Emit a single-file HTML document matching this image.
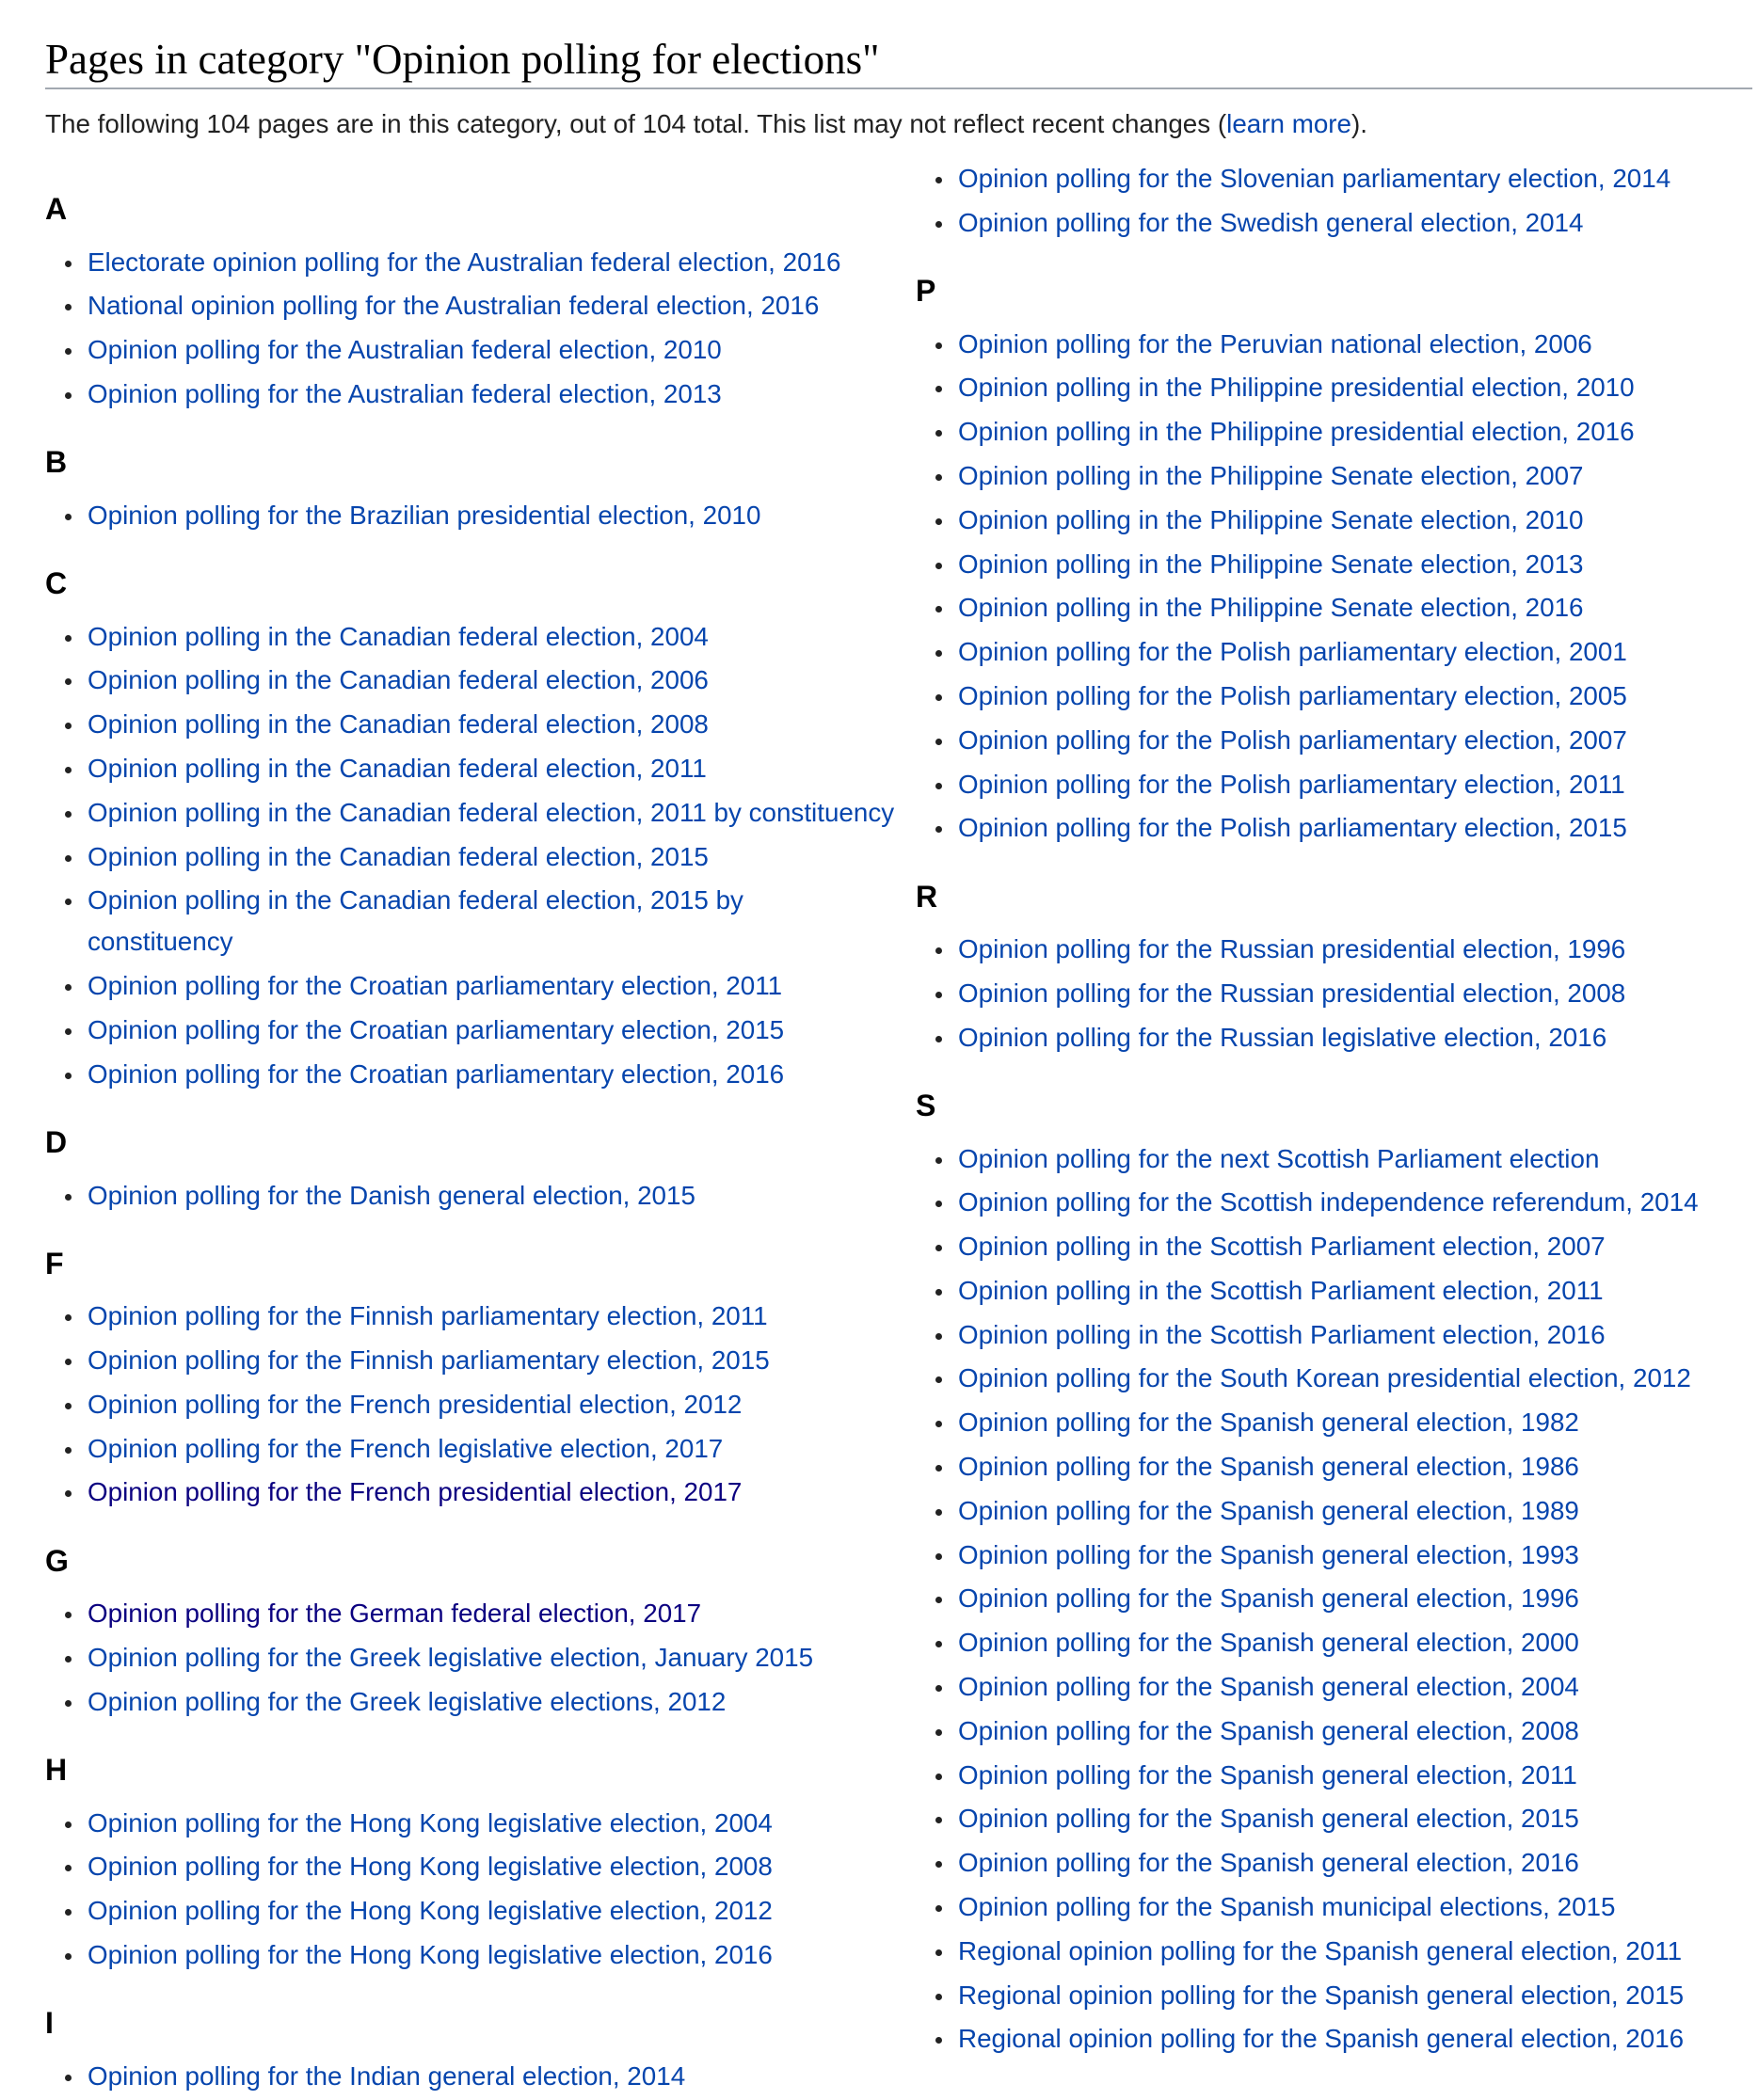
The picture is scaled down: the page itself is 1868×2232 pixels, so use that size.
<!DOCTYPE html>
<html><head><meta charset="utf-8"><style>
html,body{margin:0;padding:0;background:#fff;}
body{width:1868px;height:2218px;overflow:hidden;position:relative;font-family:"Liberation Sans",Arial,sans-serif;color:#222;}
h1{position:absolute;left:48px;top:36px;margin:0;font-family:"Liberation Serif",Georgia,serif;font-weight:normal;font-size:45px;line-height:54px;color:#000;white-space:nowrap;}
.rule{position:absolute;left:48px;right:6px;top:93px;height:2px;background:#a2a9b1;}
.intro{position:absolute;left:48px;top:114px;font-size:27.8px;line-height:36px;color:#222;white-space:nowrap;}
a{color:#0645ad;text-decoration:none;}
a.v{color:#0b0080;}
.col{position:absolute;top:168px;width:920px;}
.c1{left:48px;} .c2{left:973px;}
h3{margin:30.2px 0 14.6px 0;font-size:32px;line-height:40px;font-weight:bold;color:#000;}
.c1 h3:first-child{margin-top:34px;}
ul{list-style:none;margin:0;padding:0;}
li{position:relative;padding-left:45px;font-size:27.8px;line-height:44px;margin-bottom:2.8px;white-space:nowrap;}
li:before{content:"";position:absolute;left:21px;top:20px;width:7px;height:7px;border-radius:50%;background:#222;}
</style></head><body>
<h1>Pages in category "Opinion polling for elections"</h1>
<div class="rule"></div>
<div class="intro">The following 104 pages are in this category, out of 104 total. This list may not reflect recent changes (<a>learn more</a>).</div>

<div class="col c1">
<h3>A</h3><ul>
<li><a>Electorate opinion polling for the Australian federal election, 2016</a></li>
<li><a>National opinion polling for the Australian federal election, 2016</a></li>
<li><a>Opinion polling for the Australian federal election, 2010</a></li>
<li><a>Opinion polling for the Australian federal election, 2013</a></li></ul>
<h3>B</h3><ul>
<li><a>Opinion polling for the Brazilian presidential election, 2010</a></li></ul>
<h3>C</h3><ul>
<li><a>Opinion polling in the Canadian federal election, 2004</a></li>
<li><a>Opinion polling in the Canadian federal election, 2006</a></li>
<li><a>Opinion polling in the Canadian federal election, 2008</a></li>
<li><a>Opinion polling in the Canadian federal election, 2011</a></li>
<li><a>Opinion polling in the Canadian federal election, 2011 by constituency</a></li>
<li><a>Opinion polling in the Canadian federal election, 2015</a></li>
<li><a>Opinion polling in the Canadian federal election, 2015 by<br>constituency</a></li>
<li><a>Opinion polling for the Croatian parliamentary election, 2011</a></li>
<li><a>Opinion polling for the Croatian parliamentary election, 2015</a></li>
<li><a>Opinion polling for the Croatian parliamentary election, 2016</a></li></ul>
<h3>D</h3><ul>
<li><a>Opinion polling for the Danish general election, 2015</a></li></ul>
<h3>F</h3><ul>
<li><a>Opinion polling for the Finnish parliamentary election, 2011</a></li>
<li><a>Opinion polling for the Finnish parliamentary election, 2015</a></li>
<li><a>Opinion polling for the French presidential election, 2012</a></li>
<li><a>Opinion polling for the French legislative election, 2017</a></li>
<li><a class="v">Opinion polling for the French presidential election, 2017</a></li></ul>
<h3>G</h3><ul>
<li><a class="v">Opinion polling for the German federal election, 2017</a></li>
<li><a>Opinion polling for the Greek legislative election, January 2015</a></li>
<li><a>Opinion polling for the Greek legislative elections, 2012</a></li></ul>
<h3>H</h3><ul>
<li><a>Opinion polling for the Hong Kong legislative election, 2004</a></li>
<li><a>Opinion polling for the Hong Kong legislative election, 2008</a></li>
<li><a>Opinion polling for the Hong Kong legislative election, 2012</a></li>
<li><a>Opinion polling for the Hong Kong legislative election, 2016</a></li></ul>
<h3>I</h3><ul>
<li><a>Opinion polling for the Indian general election, 2014</a></li></ul>
</div>

<div class="col c2">
<ul>
<li><a>Opinion polling for the Slovenian parliamentary election, 2014</a></li>
<li><a>Opinion polling for the Swedish general election, 2014</a></li></ul>
<h3>P</h3><ul>
<li><a>Opinion polling for the Peruvian national election, 2006</a></li>
<li><a>Opinion polling in the Philippine presidential election, 2010</a></li>
<li><a>Opinion polling in the Philippine presidential election, 2016</a></li>
<li><a>Opinion polling in the Philippine Senate election, 2007</a></li>
<li><a>Opinion polling in the Philippine Senate election, 2010</a></li>
<li><a>Opinion polling in the Philippine Senate election, 2013</a></li>
<li><a>Opinion polling in the Philippine Senate election, 2016</a></li>
<li><a>Opinion polling for the Polish parliamentary election, 2001</a></li>
<li><a>Opinion polling for the Polish parliamentary election, 2005</a></li>
<li><a>Opinion polling for the Polish parliamentary election, 2007</a></li>
<li><a>Opinion polling for the Polish parliamentary election, 2011</a></li>
<li><a>Opinion polling for the Polish parliamentary election, 2015</a></li></ul>
<h3>R</h3><ul>
<li><a>Opinion polling for the Russian presidential election, 1996</a></li>
<li><a>Opinion polling for the Russian presidential election, 2008</a></li>
<li><a>Opinion polling for the Russian legislative election, 2016</a></li></ul>
<h3>S</h3><ul>
<li><a>Opinion polling for the next Scottish Parliament election</a></li>
<li><a>Opinion polling for the Scottish independence referendum, 2014</a></li>
<li><a>Opinion polling in the Scottish Parliament election, 2007</a></li>
<li><a>Opinion polling in the Scottish Parliament election, 2011</a></li>
<li><a>Opinion polling in the Scottish Parliament election, 2016</a></li>
<li><a>Opinion polling for the South Korean presidential election, 2012</a></li>
<li><a>Opinion polling for the Spanish general election, 1982</a></li>
<li><a>Opinion polling for the Spanish general election, 1986</a></li>
<li><a>Opinion polling for the Spanish general election, 1989</a></li>
<li><a>Opinion polling for the Spanish general election, 1993</a></li>
<li><a>Opinion polling for the Spanish general election, 1996</a></li>
<li><a>Opinion polling for the Spanish general election, 2000</a></li>
<li><a>Opinion polling for the Spanish general election, 2004</a></li>
<li><a>Opinion polling for the Spanish general election, 2008</a></li>
<li><a>Opinion polling for the Spanish general election, 2011</a></li>
<li><a>Opinion polling for the Spanish general election, 2015</a></li>
<li><a>Opinion polling for the Spanish general election, 2016</a></li>
<li><a>Opinion polling for the Spanish municipal elections, 2015</a></li>
<li><a>Regional opinion polling for the Spanish general election, 2011</a></li>
<li><a>Regional opinion polling for the Spanish general election, 2015</a></li>
<li><a>Regional opinion polling for the Spanish general election, 2016</a></li></ul>
</div>
</body></html>
